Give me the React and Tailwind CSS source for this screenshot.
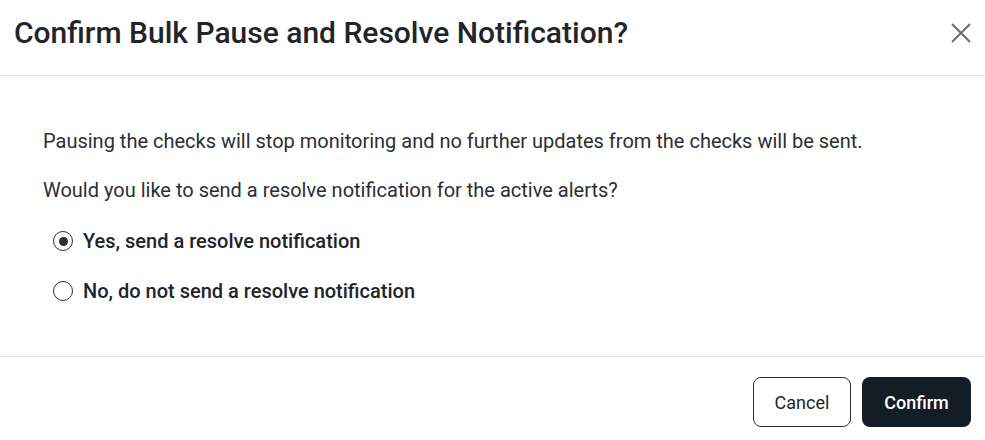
export default function App() {
  return (
    <div className="w-[985px] h-[440px] bg-white text-[#1f2329]" style={{ fontFamily: "Roboto, 'Noto Sans', sans-serif" }}>
      <div className="h-[76px] flex items-start justify-between pl-[14px] pr-[12px] pt-[15px] border-b border-[#e3e3e6]">
        <h1 className="text-[30px] leading-[36px] font-medium text-[#21252b]">Confirm Bulk Pause and Resolve Notification?</h1>
        <svg width="24" height="24" viewBox="0 0 24 24" className="text-[#6b6b6b] mt-[6px]">
          <path d="M3 3 L21 21 M21 3 L3 21" stroke="currentColor" strokeWidth="2" fill="none" />
        </svg>
      </div>
      <div className="h-[280px] pl-[43px] pt-[50px] flex flex-col">
        <p className="text-[20px] text-[#2b2f33] leading-[30px]">Pausing the checks will stop monitoring and no further updates from the checks will be sent.</p>
        <p className="text-[20px] text-[#2b2f33] leading-[30px] mt-[19px]">Would you like to send a resolve notification for the active alerts?</p>
        <div className="flex flex-col gap-[20px] mt-[21px] pl-[10px]">
          <label className="flex items-center gap-[10px] h-[30px]">
            <span className="w-[20px] h-[20px] rounded-full border-[1.5px] border-[#2b2f33] flex items-center justify-center">
              <span className="w-[9px] h-[9px] rounded-full bg-[#2b2f33]" />
            </span>
            <span className="text-[20px] font-medium text-[#21252b]">Yes, send a resolve notification</span>
          </label>
          <label className="flex items-center gap-[10px] h-[30px]">
            <span className="w-[20px] h-[20px] rounded-full border-[1.5px] border-[#2b2f33]" />
            <span className="text-[20px] font-medium text-[#21252b]">No, do not send a resolve notification</span>
          </label>
        </div>
      </div>
      <div className="border-t border-[#e3e3e6] flex justify-end gap-[11px] pr-[14px] pt-[20px]">
        <button className="w-[98px] h-[50px] rounded-[8px] border border-[#2b2f33] text-[18px] text-[#21252b] bg-white">Cancel</button>
        <button className="w-[109px] h-[50px] rounded-[8px] bg-[#141d26] text-[18px] font-medium text-white">Confirm</button>
      </div>
    </div>
  );
}
